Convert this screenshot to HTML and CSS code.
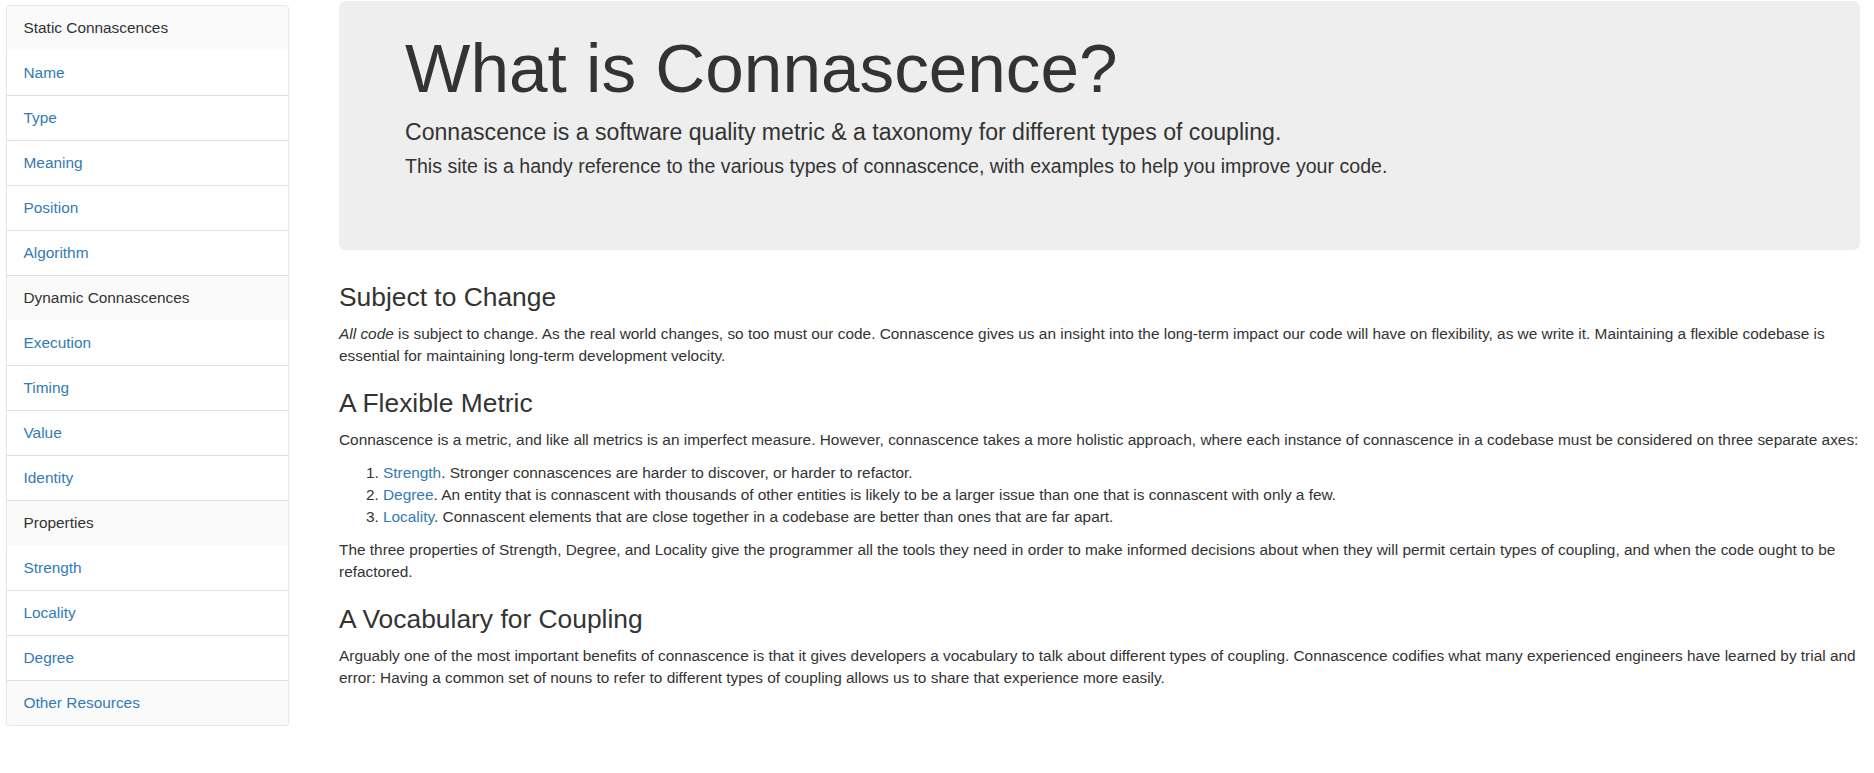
FILE: index.html
```html
<!DOCTYPE html>
<html lang="en">
<head>
<meta charset="utf-8">
<title>What is Connascence?</title>
<link rel="stylesheet" href="styles.css">
</head>
<body>
<div class="page">
  <nav class="sidebar">
    <div class="item head">Static Connascences</div>
    <a class="item after-head" href="#">Name</a>
    <a class="item" href="#">Type</a>
    <a class="item" href="#">Meaning</a>
    <a class="item" href="#">Position</a>
    <a class="item" href="#">Algorithm</a>
    <div class="item head">Dynamic Connascences</div>
    <a class="item after-head" href="#">Execution</a>
    <a class="item" href="#">Timing</a>
    <a class="item" href="#">Value</a>
    <a class="item" href="#">Identity</a>
    <div class="item head">Properties</div>
    <a class="item after-head" href="#">Strength</a>
    <a class="item" href="#">Locality</a>
    <a class="item" href="#">Degree</a>
    <a class="item shaded" href="#">Other Resources</a>
  </nav>
  <main class="main">
    <div class="jumbotron">
      <h1>What is Connascence?</h1>
      <p class="lead">Connascence is a software quality metric &amp; a taxonomy for different types of coupling.</p>
      <h4 class="sub">This site is a handy reference to the various types of connascence, with examples to help you improve your code.</h4>
    </div>

    <h3>Subject to Change</h3>
    <p><em>All code</em> is subject to change. As the real world changes, so too must our code. Connascence gives us an insight into the long-term impact our code will have on flexibility, as we write it. Maintaining a flexible codebase is essential for maintaining long-term development velocity.</p>

    <h3>A Flexible Metric</h3>
    <p>Connascence is a metric, and like all metrics is an imperfect measure. However, connascence takes a more holistic approach, where each instance of connascence in a codebase must be considered on three separate axes:</p>
    <ol>
      <li><a href="#">Strength</a>. Stronger connascences are harder to discover, or harder to refactor.</li>
      <li><a href="#">Degree</a>. An entity that is connascent with thousands of other entities is likely to be a larger issue than one that is connascent with only a few.</li>
      <li><a href="#">Locality</a>. Connascent elements that are close together in a codebase are better than ones that are far apart.</li>
    </ol>
    <p>The three properties of Strength, Degree, and Locality give the programmer all the tools they need in order to make informed decisions about when they will permit certain types of coupling, and when the code ought to be refactored.</p>

    <h3>A Vocabulary for Coupling</h3>
    <p>Arguably one of the most important benefits of connascence is that it gives developers a vocabulary to talk about different types of coupling. Connascence codifies what many experienced engineers have learned by trial and error: Having a common set of nouns to refer to different types of coupling allows us to share that experience more easily.</p>
  </main>
</div>
</body>
</html>
```

FILE: styles.css
```css
html, body {
  margin: 0;
  padding: 0;
  background: #fff;
}

body {
  font-family: "Liberation Sans", Arial, Helvetica, sans-serif;
  font-size: 15.4px;
  line-height: 22px;
  color: #333;
}

a {
  color: #337ab7;
  text-decoration: none;
}

.page {
  display: flex;
  align-items: flex-start;
  gap: 50px;
  padding-left: 6px;
  padding-right: 14px;
}

.sidebar {
  flex: 0 0 283px;
  width: 283px;
  box-sizing: border-box;
  margin-top: 5px;
  display: flex;
  flex-direction: column;
  border: 1px solid #e6e6e6;
  border-radius: 4px;
  box-shadow: 0 1px 2px rgba(0, 0, 0, 0.07);
  background: #fff;
  overflow: hidden;
}

.item {
  display: block;
  box-sizing: border-box;
  height: 45px;
  padding: 11px 16px 11px 16.5px;
  border-top: 1px solid #ddd;
  line-height: 22px;
  font-size: 15.4px;
  color: #337ab7;
}

.item:first-child {
  border-top: 0;
  height: 44px;
}

.item.head {
  background: #fafafa;
  color: #333;
}

.item.after-head {
  border-top-color: transparent;
}

.item.shaded {
  background: #fafafa;
}

.main {
  flex: 1 1 auto;
  min-width: 0;
  margin-top: 1px;
}

.jumbotron {
  background: #eee;
  border-radius: 6.6px;
  padding: 29px 66px 71px;
  margin-bottom: 33px;
}

.jumbotron h1 {
  margin: 0;
  font-size: 69.3px;
  line-height: 76px;
  font-weight: normal;
  color: #333;
}

.jumbotron .lead {
  margin: 10.5px 0 0;
  font-size: 23.1px;
  line-height: 30px;
}

.jumbotron .sub {
  margin: 6.5px 0 0;
  font-size: 19.6px;
  line-height: 26px;
  font-weight: normal;
}

h3 {
  margin: 22px 0 11px;
  font-size: 26.4px;
  line-height: 1.1;
  font-weight: normal;
  color: #333;
}

p {
  margin: 0 0 11px;
}

ol {
  margin: 0 0 11px;
  padding-left: 44px;
}
```
